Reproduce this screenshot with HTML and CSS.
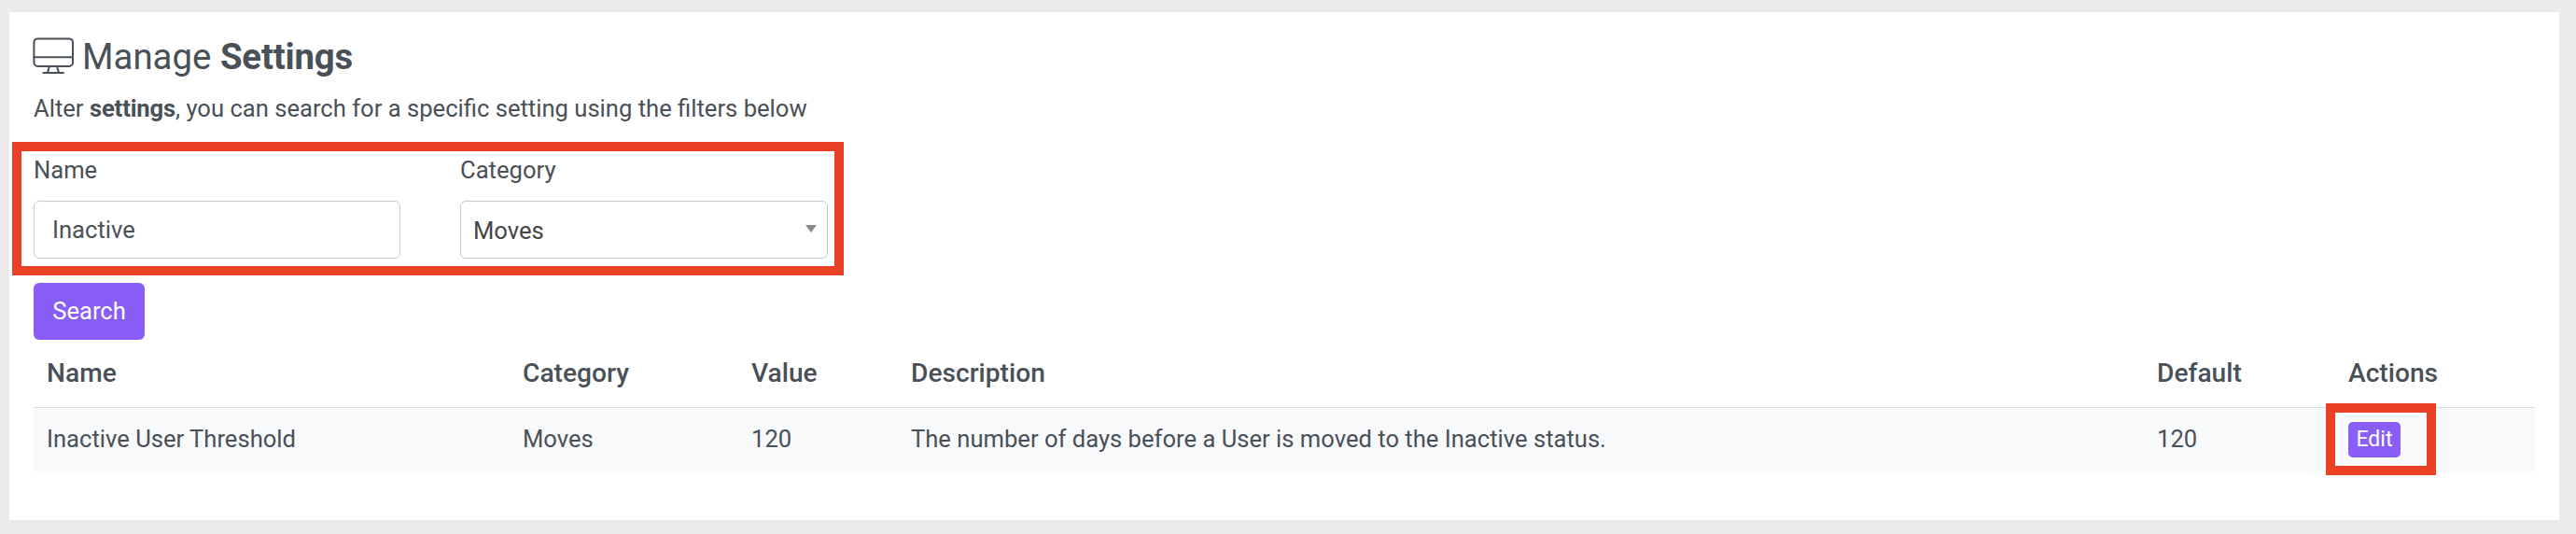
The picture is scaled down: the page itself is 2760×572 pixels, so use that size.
FILE: index.html
```html
<!DOCTYPE html>
<html lang="en">
<head>
<meta charset="utf-8">
<title>Manage Settings</title>
<link rel="stylesheet" href="styles.css">
</head>
<body>
<main class="card">
  <h1 class="title">
    <svg class="title-icon" viewBox="0 0 44 40" fill="none" stroke="currentColor" stroke-width="2">
      <rect x="1.4" y="1.4" width="41.6" height="29.6" rx="4"/>
      <path d="M1.4 21.2H43M18 31L16 37.6M26 31L28 37.6M11.4 38H33" stroke-linecap="round"/>
    </svg>
    <span>Manage <b>Settings</b></span>
  </h1>
  <p class="intro">Alter <b>settings</b>, you can search for a specific setting using the filters below</p>
  <form class="search">
    <div class="filters">
      <div class="field">
        <label class="label" for="name">Name</label>
        <input class="control" id="name" type="text" value="Inactive">
      </div>
      <div class="field">
        <span class="label">Category</span>
        <div class="control select"><span>Moves</span><i class="arrow"></i></div>
      </div>
    </div>
    <button class="button" type="button">Search</button>
  </form>
  <table class="table">
    <colgroup><col class="c-name"><col class="c-category"><col class="c-value"><col class="c-description"><col class="c-default"><col></colgroup>
    <thead>
      <tr><th>Name</th><th>Category</th><th>Value</th><th>Description</th><th>Default</th><th>Actions</th></tr>
    </thead>
    <tbody>
      <tr>
        <td>Inactive User Threshold</td><td>Moves</td><td>120</td>
        <td>The number of days before a User is moved to the Inactive status.</td><td>120</td>
        <td class="actions"><button class="button small" type="button">Edit</button></td>
      </tr>
    </tbody>
  </table>
</main>
</body>
</html>
```

FILE: styles.css
```css
*, *::before { box-sizing: border-box; }
body {
  margin: 0;
  padding: 13px 18px 15px 10px;
  height: 572px;
  background: #ebebeb;
  color: #495057;
  font: 25.6px/39px Roboto, sans-serif;
}
b { font-weight: 700; letter-spacing: -0.005em; }
.card { height: 544px; padding: 26px 26px 0; background: #fff; }
.title {
  display: flex;
  gap: 9px;
  margin: 0;
  height: 48px;
  font-size: 38.4px;
  line-height: 43px;
  font-weight: 400;
}
.title-icon { width: 44px; height: 40px; margin: 1px 0 0 -1px; }
.intro { margin: 10px 0 0; }
.search { margin: 0; }
.filters {
  display: flex;
  gap: 64px;
  width: 891px;
  height: 143px;
  margin: 16px 0 8px -23px;
  padding: 0 7px 0 13px;
  border: 10px solid #ea4025;
}
.field { width: 393px; display: flex; flex-direction: column; }
.label { display: block; height: 53px; line-height: 41px; }
.control {
  display: block;
  width: 393px;
  height: 62px;
  padding: 0 19px;
  border: 1px solid #c3cad3;
  border-radius: 6px;
  background: #fff;
  color: #495057;
  font: inherit;
  outline: 0;
}
.select {
  display: flex;
  align-items: center;
  justify-content: space-between;
  width: 394px;
  padding: 2px 11px 0 13px;
  color: #444;
}
.arrow { border: 6px solid transparent; border-top: 8px solid #888; border-bottom: 0; margin-bottom: 4px; }
.button {
  display: block;
  width: 119px;
  height: 61px;
  padding: 0;
  border: 0;
  border-radius: 6px;
  background: #895ef6;
  color: #fff;
  font: inherit;
}
.table { width: 2680px; table-layout: fixed; border-collapse: separate; border-spacing: 0; }
.c-name { width: 509px; }
.c-category { width: 245px; }
.c-value { width: 171px; }
.c-description { width: 1335px; }
.c-default { width: 205px; }
th {
  height: 73px;
  padding: 0 14px 2px 15px;
  border-bottom: 1px solid #d3dde6;
  font-size: 28.16px;
  font-weight: 500;
  text-align: left;
}
td { height: 68px; padding: 0 14px 2px 15px; background: #f8f9fb; }
th:first-child, td:first-child { padding-left: 14px; }
.actions { position: relative; }
.actions::before {
  content: "";
  position: absolute;
  left: -9px;
  top: -5px;
  width: 118px;
  height: 77px;
  border: 10px solid #ea4025;
}
.small { width: 56px; height: 38px; padding-bottom: 1px; font-size: 23px; line-height: 36px; margin-top: 2px; border-radius: 5px; }
```
